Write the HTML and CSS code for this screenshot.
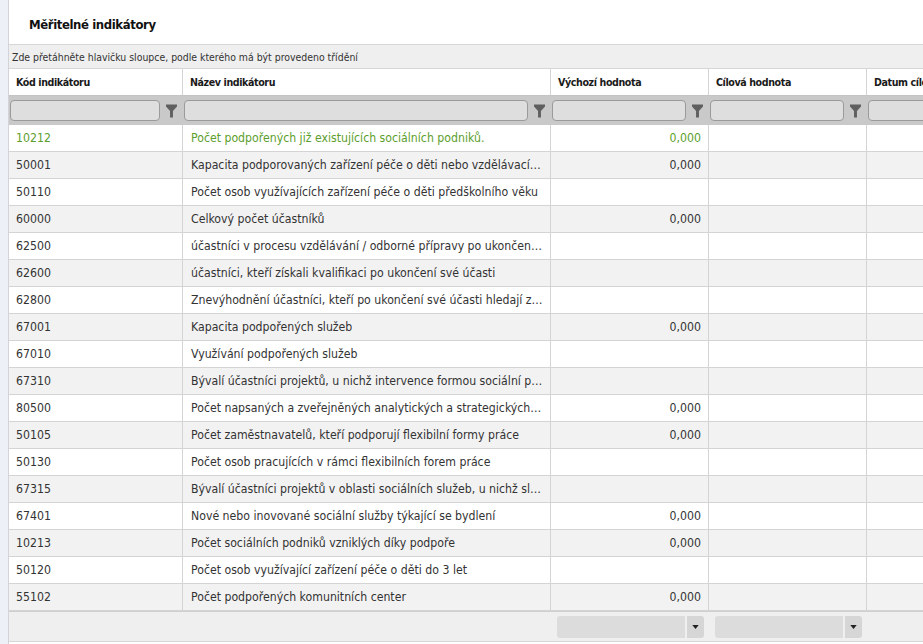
FILE: index.html
```html
<!DOCTYPE html>
<html lang="cs">
<head>
<meta charset="utf-8">
<title>Měřitelné indikátory</title>
<link rel="stylesheet" href="styles.css">
</head>
<body>
<div class="page">
  <div class="side"></div>
  <div class="main">
    <h1 class="title">Měřitelné indikátory</h1>
    <div class="grid">
      <div class="groupbar">Zde přetáhněte hlavičku sloupce, podle kterého má být provedeno třídění</div>
      <div class="row head">
        <div class="cell">Kód indikátoru</div>
        <div class="cell">Název indikátoru</div>
        <div class="cell">Výchozí hodnota</div>
        <div class="cell">Cílová hodnota</div>
        <div class="cell">Datum cílové hodnoty</div>
      </div>
      <div class="row filter">
        <div class="fcell"><span class="finput"></span><svg class="funnel" viewBox="0 0 12 16"><path d="M0 1h12v2L7.6 8v7H4.4V8L0 3z"/></svg></div>
        <div class="fcell"><span class="finput"></span><svg class="funnel" viewBox="0 0 12 16"><path d="M0 1h12v2L7.6 8v7H4.4V8L0 3z"/></svg></div>
        <div class="fcell"><span class="finput"></span><svg class="funnel" viewBox="0 0 12 16"><path d="M0 1h12v2L7.6 8v7H4.4V8L0 3z"/></svg></div>
        <div class="fcell"><span class="finput"></span><svg class="funnel" viewBox="0 0 12 16"><path d="M0 1h12v2L7.6 8v7H4.4V8L0 3z"/></svg></div>
        <div class="fcell"><span class="finput"></span><svg class="funnel" viewBox="0 0 12 16"><path d="M0 1h12v2L7.6 8v7H4.4V8L0 3z"/></svg></div>
      </div>
      <div class="row data sel"><div class="cell">10212</div><div class="cell">Počet podpořených již existujících sociálních podniků.</div><div class="cell num">0,000</div><div class="cell"></div><div class="cell"></div></div>
      <div class="row data alt"><div class="cell">50001</div><div class="cell">Kapacita podporovaných zařízení péče o děti nebo vzdělávacích zařízení</div><div class="cell num">0,000</div><div class="cell"></div><div class="cell"></div></div>
      <div class="row data"><div class="cell">50110</div><div class="cell">Počet osob využívajících zařízení péče o děti předškolního věku</div><div class="cell num"></div><div class="cell"></div><div class="cell"></div></div>
      <div class="row data alt"><div class="cell">60000</div><div class="cell">Celkový počet účastníků</div><div class="cell num">0,000</div><div class="cell"></div><div class="cell"></div></div>
      <div class="row data"><div class="cell">62500</div><div class="cell">účastníci v procesu vzdělávání / odborné přípravy po ukončení své účasti</div><div class="cell num"></div><div class="cell"></div><div class="cell"></div></div>
      <div class="row data alt"><div class="cell">62600</div><div class="cell">účastníci, kteří získali kvalifikaci po ukončení své účasti</div><div class="cell num"></div><div class="cell"></div><div class="cell"></div></div>
      <div class="row data"><div class="cell">62800</div><div class="cell">Znevýhodnění účastníci, kteří po ukončení své účasti hledají zaměstnání</div><div class="cell num"></div><div class="cell"></div><div class="cell"></div></div>
      <div class="row data alt"><div class="cell">67001</div><div class="cell">Kapacita podpořených služeb</div><div class="cell num">0,000</div><div class="cell"></div><div class="cell"></div></div>
      <div class="row data"><div class="cell">67010</div><div class="cell">Využívání podpořených služeb</div><div class="cell num"></div><div class="cell"></div><div class="cell"></div></div>
      <div class="row data alt"><div class="cell">67310</div><div class="cell">Bývalí účastníci projektů, u nichž intervence formou sociální práce naplnila svůj účel</div><div class="cell num"></div><div class="cell"></div><div class="cell"></div></div>
      <div class="row data"><div class="cell">80500</div><div class="cell">Počet napsaných a zveřejněných analytických a strategických dokumentů</div><div class="cell num">0,000</div><div class="cell"></div><div class="cell"></div></div>
      <div class="row data alt"><div class="cell">50105</div><div class="cell">Počet zaměstnavatelů, kteří podporují flexibilní formy práce</div><div class="cell num">0,000</div><div class="cell"></div><div class="cell"></div></div>
      <div class="row data"><div class="cell">50130</div><div class="cell">Počet osob pracujících v rámci flexibilních forem práce</div><div class="cell num"></div><div class="cell"></div><div class="cell"></div></div>
      <div class="row data alt"><div class="cell">67315</div><div class="cell">Bývalí účastníci projektů v oblasti sociálních služeb, u nichž služba naplnila svůj účel</div><div class="cell num"></div><div class="cell"></div><div class="cell"></div></div>
      <div class="row data"><div class="cell">67401</div><div class="cell">Nové nebo inovované sociální služby týkající se bydlení</div><div class="cell num">0,000</div><div class="cell"></div><div class="cell"></div></div>
      <div class="row data alt"><div class="cell">10213</div><div class="cell">Počet sociálních podniků vzniklých díky podpoře</div><div class="cell num">0,000</div><div class="cell"></div><div class="cell"></div></div>
      <div class="row data"><div class="cell">50120</div><div class="cell">Počet osob využívající zařízení péče o děti do 3 let</div><div class="cell num"></div><div class="cell"></div><div class="cell"></div></div>
      <div class="row data alt"><div class="cell">55102</div><div class="cell">Počet podpořených komunitních center</div><div class="cell num">0,000</div><div class="cell"></div><div class="cell"></div></div>
      <div class="row foot">
        <div class="fc"></div>
        <div class="fc"></div>
        <div class="fc"><span class="dd"></span><span class="ddbtn"><svg viewBox="0 0 8 5"><path d="M0 0h8L4 5z"/></svg></span></div>
        <div class="fc"><span class="dd"></span><span class="ddbtn"><svg viewBox="0 0 8 5"><path d="M0 0h8L4 5z"/></svg></span></div>
        <div class="fc"></div>
      </div>
    </div>
  </div>
</div>
</body>
</html>
```
FILE: styles.css
```css
* { box-sizing: border-box; }
html, body { margin: 0; padding: 0; background: #fff; }
body {
  font-family: "DejaVu Sans Condensed", "DejaVu Sans", sans-serif;
  font-stretch: condensed;
  color: #333;
  width: 923px;
  height: 644px;
  overflow: hidden;
}
.page { display: flex; height: 644px; }
.side { width: 9px; flex: none; background: #eef0f8; border-right: 1px solid #d2d4da; }
.main { flex: 1; min-width: 0; overflow: hidden; }
.title {
  margin: 0;
  height: 44px;
  padding: 17px 0 0 20px;
  font-size: 13px;
  letter-spacing: -0.4px;
  font-weight: bold;
  color: #111;
}
.grid { width: 1100px; }
.groupbar {
  height: 25px;
  border-top: 1px solid #d6d6d6;
  border-bottom: 1px solid #d6d6d6;
  background: #efefef;
  font-size: 10.4px;
  color: #333;
  padding: 6px 0 0 3px;
}
.row {
  display: grid;
  grid-template-columns: 174px 368px 158px 158px 242px;
}
.cell {
  border-right: 1px solid #d4d4d4;
  padding: 0 7px;
  white-space: nowrap;
  overflow: hidden;
  text-overflow: ellipsis;
  font-size: 12.2px;
  line-height: 26px;
}
.head { height: 27px; background: #fff; border-bottom: 1px solid #c4c4c4; }
.head .cell { font-weight: bold; font-size: 10.6px; letter-spacing: -0.4px; color: #1a1a1a; line-height: 27px; }
.filter { height: 29px; background: #c9c9c9; }
.fcell { display: flex; align-items: center; padding: 0 6px 0 1px; gap: 6px; }
.finput {
  flex: 1;
  height: 21px;
  background: #dedede;
  border: 1px solid #9a9a9a;
  border-radius: 4px;
}
.funnel { width: 11px; height: 16px; fill: #5f5f5f; flex: none; }
.data { height: 27px; border-bottom: 1px solid #d4d4d4; background: #fff; }
.data.alt { background: #f2f2f2; }
.data .cell:first-child { padding-left: 7px; }
.data .cell:nth-child(2) { padding-left: 8px; }
.num { text-align: right; }
.sel .cell { color: #5c9e2c; }
.foot {
  height: 31px;
  background: #efefef;
  border-top: 1px solid #cfcfcf;
  border-bottom: 1px solid #d6d6d6;
}
.fc { display: flex; align-items: center; padding: 0 5px 0 6px; gap: 2px; }
.dd { flex: 1; height: 22px; background: #dcdcdc; border-radius: 3px 0 0 3px; }
.ddbtn {
  width: 17px; height: 22px; background: #d6d6d6; border-radius: 0 3px 3px 0;
  display: flex; align-items: center; justify-content: center;
}
.ddbtn svg { width: 7px; height: 4px; fill: #222; }
```
